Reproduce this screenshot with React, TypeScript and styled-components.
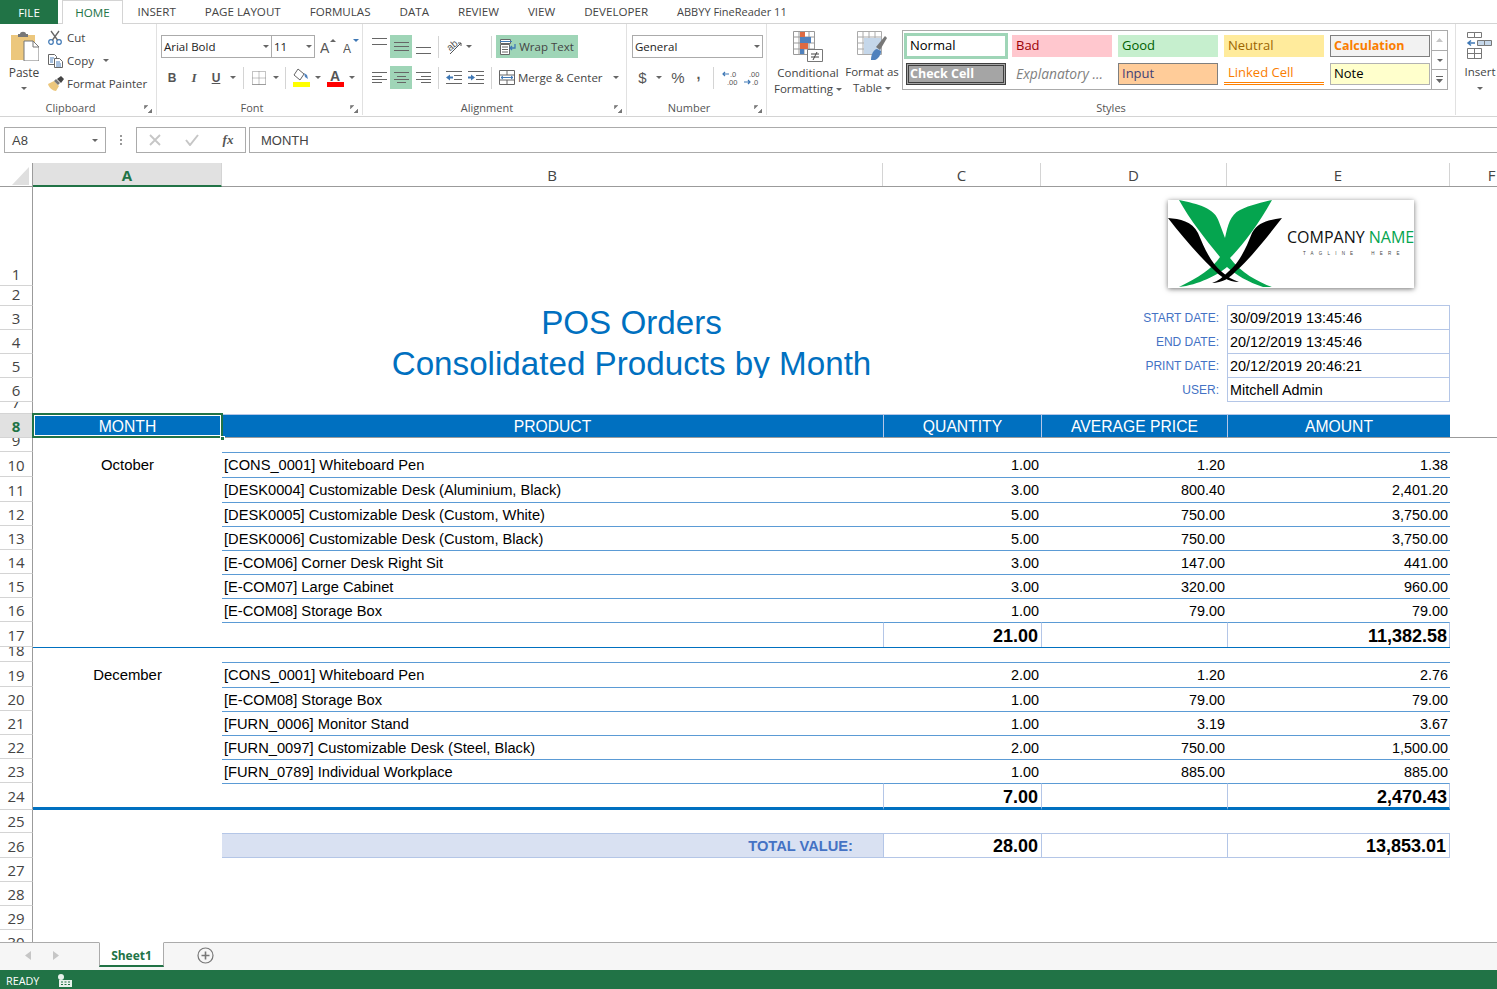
import React from "react";
import styled, { createGlobalStyle } from "styled-components";

const GREEN = "#217346";
const BLUE = "#0070c0";
const LINE = "#5b9bd5";
const SOFT = "#b4c6e7";
const SEP = "#d4d4d4";
const HILITE = "#9fd5b7";
const UI_FONT = `"Open Sans", "Noto Sans", sans-serif`;
const CELL_FONT = `"Liberation Sans", Arial, sans-serif`;

const COLS = "33px 189px 661px 158px 186px 223px 84px";
const ROWS = [99, 20, 24, 24, 24, 24, 12, 24, 14, 25, 25, 24, 24, 24, 24, 24, 25, 15, 25, 24, 24, 24, 24, 27, 23, 25, 24, 24, 24, 24];

const TABS = ["INSERT", "PAGE LAYOUT", "FORMULAS", "DATA", "REVIEW", "VIEW", "DEVELOPER"];

const MONTHS = [
  {
    month: "October",
    start: 10,
    qty: "21.00",
    amount: "11,382.58",
    items: [
      ["[CONS_0001] Whiteboard Pen", "1.00", "1.20", "1.38"],
      ["[DESK0004] Customizable Desk (Aluminium, Black)", "3.00", "800.40", "2,401.20"],
      ["[DESK0005] Customizable Desk (Custom, White)", "5.00", "750.00", "3,750.00"],
      ["[DESK0006] Customizable Desk (Custom, Black)", "5.00", "750.00", "3,750.00"],
      ["[E-COM06] Corner Desk Right Sit", "3.00", "147.00", "441.00"],
      ["[E-COM07] Large Cabinet", "3.00", "320.00", "960.00"],
      ["[E-COM08] Storage Box", "1.00", "79.00", "79.00"],
    ],
  },
  {
    month: "December",
    start: 19,
    qty: "7.00",
    amount: "2,470.43",
    items: [
      ["[CONS_0001] Whiteboard Pen", "2.00", "1.20", "2.76"],
      ["[E-COM08] Storage Box", "1.00", "79.00", "79.00"],
      ["[FURN_0006] Monitor Stand", "1.00", "3.19", "3.67"],
      ["[FURN_0097] Customizable Desk (Steel, Black)", "2.00", "750.00", "1,500.00"],
      ["[FURN_0789] Individual Workplace", "1.00", "885.00", "885.00"],
    ],
  },
];

const INFO = [
  ["START DATE:", "30/09/2019 13:45:46"],
  ["END DATE:", "20/12/2019 13:45:46"],
  ["PRINT DATE:", "20/12/2019 20:46:21"],
  ["USER:", "Mitchell Admin"],
];

const STYLE_CELLS: [string, string][] = [
  ["Normal", "normal"],
  ["Bad", "bad"],
  ["Good", "good"],
  ["Neutral", "neutral"],
  ["Calculation", "calc"],
  ["Check Cell", "check"],
  ["Explanatory ...", "explain"],
  ["Input", "input"],
  ["Linked Cell", "linked"],
  ["Note", "note"],
];

const STYLE_CSS: Record<string, string> = {
  normal: "background:#fff;color:#000;outline:3px solid #9fd5b7;outline-offset:-1px;",
  bad: "background:#ffc7ce;color:#9c0006;",
  good: "background:#c6efce;color:#006100;",
  neutral: "background:#ffeb9c;color:#9c6500;",
  calc: "background:#f2f2f2;color:#fa7d00;font-weight:700;font-size:12.5px;border:1px solid #7f7f7f;padding-left:3px;",
  check: "background:#a5a5a5;color:#fff;font-weight:700;font-size:12.5px;border:3px double #3f3f3f;padding-left:1px;",
  explain: "background:#fff;color:#7f7f7f;font-style:italic;font-size:13.8px;",
  input: "background:#ffcc99;color:#3f3f76;border:1px solid #7f7f7f;padding-left:3px;",
  linked: "background:#fff;color:#fa7d00;border-bottom:3px double #ff8001;",
  note: "background:#ffffcc;color:#000;border:1px solid #b2b2b2;padding-left:3px;",
};

const GlobalStyle = createGlobalStyle`
  html, body { margin: 0; padding: 0; background: #fff; }
  body { font-family: ${UI_FONT}; }
`;

const Page = styled.div`
  width: 100%;
  height: 989px;
  display: flex;
  flex-direction: column;
  overflow: hidden;
  background: #fff;
`;

const TabBar = styled.div`
  height: 24px;
  display: flex;
  box-sizing: border-box;
  border-bottom: 1px solid ${SEP};
  font-size: 11.6px;
  color: #444;
`;

const FileTab = styled.div`
  width: 58px;
  height: 24px;
  background: ${GREEN};
  color: #fff;
  display: flex;
  align-items: center;
  justify-content: center;
`;

const HomeTab = styled.div`
  width: 61px;
  height: 24px;
  margin-left: 4px;
  box-sizing: border-box;
  background: #fff;
  border: 1px solid ${SEP};
  border-bottom: none;
  color: ${GREEN};
  display: flex;
  align-items: center;
  justify-content: center;
`;

const TabItem = styled.div<{ $small?: boolean }>`
  height: 23px;
  display: flex;
  align-items: center;
  padding: 0 14.5px;
  white-space: nowrap;
  font-size: ${(p) => (p.$small ? "11px" : "inherit")};
`;

const Ribbon = styled.div`
  height: 93px;
  box-sizing: border-box;
  display: flex;
  border-bottom: 1px solid ${SEP};
  color: #444;
  font-size: 11.5px;
`;

const Group = styled.div<{ $w: number }>`
  width: ${(p) => p.$w}px;
  flex: none;
  box-sizing: border-box;
  position: relative;
  display: flex;
  flex-direction: column;
  border-right: 1px solid #e1e1e1;
  margin-bottom: 1px;
`;

const GroupBody = styled.div`
  flex: 1;
  display: flex;
  min-height: 0;
`;

const Caption = styled.div<{ $centered?: boolean }>`
  height: 15px;
  line-height: 15px;
  font-size: 11px;
  text-align: center;
  padding-right: ${(p) => (p.$centered ? 0 : 15)}px;
  color: #555;
`;

const Launcher = styled.svg`
  position: absolute;
  right: 4px;
  bottom: 2px;
`;

const Stack = styled.div<{ $pad?: number }>`
  display: flex;
  flex-direction: column;
  gap: 8px;
  padding: 11px 0 0 ${(p) => p.$pad ?? 0}px;
`;

const ToolRow = styled.div`
  display: flex;
  align-items: center;
  height: 23px;
`;

const Tool = styled.div<{ $w?: number; $on?: boolean; $start?: boolean }>`
  width: ${(p) => (p.$w ? `${p.$w}px` : "auto")};
  height: 23px;
  flex: none;
  box-sizing: border-box;
  display: flex;
  align-items: center;
  justify-content: ${(p) => (p.$start ? "flex-start" : "center")};
  padding-left: ${(p) => (p.$start ? 3 : 0)}px;
  gap: 3px;
  background: ${(p) => (p.$on ? HILITE : "transparent")};
  white-space: nowrap;
  svg {
    flex: none;
  }
`;

const Sep = styled.div<{ $l?: number; $r?: number }>`
  width: 1px;
  height: 22px;
  background: ${SEP};
  margin: 0 ${(p) => p.$r ?? 4}px 0 ${(p) => p.$l ?? 4}px;
  flex: none;
`;

const Caret = styled.span<{ $w?: number }>`
  width: ${(p) => p.$w ?? 11}px;
  flex: none;
  display: flex;
  justify-content: center;
  &::before {
    content: "";
    border-left: 3px solid transparent;
    border-right: 3px solid transparent;
    border-top: 3px solid #666;
  }
`;

const PasteButton = styled.div`
  width: 48px;
  display: flex;
  flex-direction: column;
  align-items: center;
  padding-top: 7px;
`;

const PasteLabel = styled.div`
  line-height: 16px;
  margin: 4px 0 6px;
  font-size: 12px;
`;

const ClipList = styled.div`
  display: flex;
  flex-direction: column;
  padding-top: 2px;
`;

const ClipItem = styled.div`
  height: 23px;
  display: flex;
  align-items: center;
  white-space: nowrap;
`;

const ClipIcon = styled.span`
  width: 19px;
  flex: none;
  display: flex;
`;

const SelectBox = styled.div<{ $w: number; $joined?: boolean }>`
  width: ${(p) => p.$w}px;
  height: 23px;
  box-sizing: border-box;
  border: 1px solid #ababab;
  border-left-width: ${(p) => (p.$joined ? 0 : 1)}px;
  display: flex;
  align-items: center;
  justify-content: space-between;
  padding-left: 2px;
  color: #222;
  font-size: 11.5px;
  flex: none;
`;

const Glyph = styled.span<{ $bold?: boolean; $italic?: boolean; $under?: boolean; $size?: number; $font?: string; $lift?: number }>`
  font-family: ${(p) => p.$font ?? `"Liberation Serif", serif`};
  font-weight: ${(p) => (p.$bold ? 700 : 400)};
  font-style: ${(p) => (p.$italic ? "italic" : "normal")};
  text-decoration: ${(p) => (p.$under ? "underline" : "none")};
  font-size: ${(p) => p.$size ?? 13}px;
  transform: translateY(${(p) => -(p.$lift ?? 0)}px);
  color: #555;
`;

const BigButton = styled.div<{ $w: number; $ml?: number }>`
  width: ${(p) => p.$w}px;
  margin-left: ${(p) => p.$ml ?? 0}px;
  flex: none;
  display: flex;
  flex-direction: column;
  align-items: center;
  padding-top: 7px;
  line-height: 16px;
  white-space: nowrap;
`;

const BigLabel = styled.div`
  margin-top: 3px;
  text-align: center;
`;

const BigLine = styled.div`
  display: flex;
  align-items: center;
  justify-content: center;
  gap: 2px;
  min-height: 16px;
`;

const Gallery = styled.div`
  width: 546px;
  height: 60px;
  margin: 6px 0 0 2px;
  box-sizing: border-box;
  border: 1px solid #ababab;
  display: flex;
  flex: none;
  justify-content: space-between;
`;

const GalleryGrid = styled.div`
  display: grid;
  grid-template-columns: repeat(5, 100px);
  grid-template-rows: 22px 22px;
  gap: 6px;
  padding: 4px 0 0 3px;
`;

const StyleCell = styled.div<{ $kind: string }>`
  box-sizing: border-box;
  font-size: 13px;
  padding: 0 0 2px 4px;
  display: flex;
  align-items: center;
  white-space: nowrap;
  ${(p) => STYLE_CSS[p.$kind]}
`;

const GalleryScroll = styled.div`
  width: 15px;
  border-left: 1px solid #ababab;
  display: flex;
  flex-direction: column;
`;

const ScrollBtn = styled.div`
  flex: 1;
  display: flex;
  align-items: center;
  justify-content: center;
  & + & {
    border-top: 1px solid #ababab;
  }
`;

const FormulaBar = styled.div`
  height: 26px;
  margin-top: 10px;
  padding-left: 4px;
  display: flex;
  box-sizing: border-box;
  color: #444;
`;

const NameBox = styled.div`
  width: 102px;
  box-sizing: border-box;
  border: 1px solid #ababab;
  display: flex;
  align-items: center;
  justify-content: space-between;
  padding: 0 5px 0 7px;
  font-family: ${CELL_FONT};
  font-size: 13px;
`;

const Dots = styled.div`
  width: 30px;
  display: flex;
  flex-direction: column;
  align-items: center;
  justify-content: center;
  gap: 2px;
  span {
    width: 2px;
    height: 2px;
    background: #999;
  }
`;

const FxBox = styled.div`
  width: 110px;
  box-sizing: border-box;
  border: 1px solid #ababab;
  display: grid;
  grid-template-columns: 36px 37px 36px;
  align-items: center;
  justify-items: center;
`;

const FormulaInput = styled.div`
  flex: 1;
  margin-left: 3px;
  box-sizing: border-box;
  border: 1px solid #ababab;
  border-right: none;
  display: flex;
  align-items: center;
  padding-left: 11px;
  font-family: ${CELL_FONT};
  font-size: 13px;
`;

const ColumnHeader = styled.div`
  height: 24px;
  margin-top: 10px;
  flex: none;
  display: grid;
  grid-template-columns: ${COLS};
  box-sizing: border-box;
  border-bottom: 1px solid #9b9b9b;
`;

const Corner = styled.div`
  display: flex;
  align-items: flex-end;
  justify-content: flex-end;
  padding: 0 3px 2px 0;
  border-right: 1px solid #9b9b9b;
`;

const ColHead = styled.div<{ $active?: boolean }>`
  display: flex;
  align-items: center;
  justify-content: center;
  box-sizing: border-box;
  font-size: 15px;
  height: ${(p) => (p.$active ? "24px" : "23px")};
  padding-top: ${(p) => (p.$active ? 1 : 0)}px;
  color: ${(p) => (p.$active ? GREEN : "#444")};
  font-weight: ${(p) => (p.$active ? 700 : 400)};
  background: ${(p) => (p.$active ? "#e1e1e1" : "#fff")};
  border-right: 1px solid ${SEP};
  border-bottom: ${(p) => (p.$active ? `2px solid ${GREEN}` : "none")};
  overflow: hidden;
`;

const SheetArea = styled.div`
  flex: 1;
  min-height: 0;
  overflow: hidden;
  position: relative;
`;

const Sheet = styled.div`
  display: grid;
  grid-template-columns: ${COLS};
  grid-template-rows: ${ROWS.map((h) => `${h}px`).join(" ")};
  font-family: ${CELL_FONT};
  font-size: 14.67px;
  color: #000;
`;

const RowHead = styled.div<{ $active?: boolean; $lift?: number }>`
  grid-column: 1;
  box-sizing: border-box;
  display: flex;
  align-items: flex-end;
  justify-content: center;
  overflow: hidden;
  font-family: ${UI_FONT};
  line-height: 22px;
  font-size: 15px;
  padding-bottom: ${(p) => p.$lift ?? 0}px;
  color: ${(p) => (p.$active ? GREEN : "#444")};
  font-weight: ${(p) => (p.$active ? 700 : 400)};
  background: ${(p) => (p.$active ? "#e1e1e1" : "#fff")};
  border-right: 1px solid #9b9b9b;
  border-bottom: 1px solid ${SEP};
`;

const Blank = styled.div<{ $span?: number; $top?: string; $thick?: boolean; $under?: boolean }>`
  grid-column: span ${(p) => p.$span ?? 1};
  box-sizing: border-box;
  border-top: ${(p) => (p.$top ? `1px solid ${p.$top}` : "none")};
  border-bottom: ${(p) => (p.$thick ? `3px solid ${BLUE}` : p.$under ? "1px solid #9b9b9b" : "none")};
`;

const Title = styled.div`
  grid-column: span 2;
  grid-row: span 3;
  overflow: hidden;
  box-sizing: border-box;
  padding-top: 2px;
  display: flex;
  flex-direction: column;
  align-items: center;
  justify-content: center;
  color: ${BLUE};
  font-size: 33.2px;
  line-height: 41px;
  white-space: nowrap;
`;

const InfoLabel = styled.div`
  display: flex;
  align-items: center;
  justify-content: flex-end;
  padding-right: 8px;
  color: #4472c4;
  font-size: 12px;
`;

const InfoValue = styled.div<{ $last?: boolean }>`
  box-sizing: border-box;
  display: flex;
  align-items: center;
  padding-left: 2px;
  font-size: 14.4px;
  margin-top: -1px;
  border: 1px solid ${SOFT};
  border-bottom-width: ${(p) => (p.$last ? 1 : 0)}px;
  height: 25px;
`;

const HeadCell = styled.div<{ $first?: boolean }>`
  box-sizing: border-box;
  background: ${BLUE};
  color: #fff;
  font-size: 15.7px;
  padding-top: 2px;
  display: flex;
  align-items: center;
  justify-content: center;
  border-left: ${(p) => (p.$first ? "none" : `1px solid ${SOFT}`)};
  border-bottom: 1px solid #9b9b9b;
  border-top: 1px solid ${SOFT};
`;

const SelectedCell = styled(HeadCell)`
  position: relative;
  border: none;
  &::before {
    content: "";
    position: absolute;
    inset: -1px -1px 0 -1px;
    border: 2px solid ${GREEN};
    box-shadow: inset 0 0 0 1px #fff;
  }
  &::after {
    content: "";
    position: absolute;
    right: -3px;
    bottom: -3px;
    width: 5px;
    height: 5px;
    background: ${GREEN};
    border: 1px solid #fff;
    box-sizing: border-box;
  }
`;

const MonthCell = styled.div`
  display: flex;
  align-items: center;
  justify-content: center;
  font-size: 14.9px;
`;

const DataCell = styled.div<{ $right?: boolean }>`
  box-sizing: border-box;
  border-top: 1px solid ${LINE};
  display: flex;
  align-items: center;
  justify-content: ${(p) => (p.$right ? "flex-end" : "flex-start")};
  font-size: ${(p) => (p.$right ? "14.4px" : "14.67px")};
  padding: 0 2px;
  white-space: nowrap;
`;

const TotalCell = styled.div<{ $left?: boolean; $right?: boolean; $line?: string; $thick?: boolean }>`
  box-sizing: border-box;
  border-top: 1px solid ${(p) => p.$line ?? LINE};
  border-left: ${(p) => (p.$left ? `1px solid ${SOFT}` : "none")};
  border-right: ${(p) => (p.$right ? `1px solid ${SOFT}` : "none")};
  border-bottom: ${(p) => (p.$thick ? `3px solid ${BLUE}` : "none")};
  display: flex;
  align-items: center;
  justify-content: flex-end;
  padding: 3px ${(p) => (p.$right ? 2 : 3)}px 0 0;
  font-weight: 700;
  font-size: 18px;
  white-space: nowrap;
`;

const TotalLabel = styled.div`
  box-sizing: border-box;
  background: #d9e1f2;
  border-top: 1px solid ${SOFT};
  border-bottom: 1px solid ${SOFT};
  display: flex;
  align-items: center;
  justify-content: flex-end;
  padding-right: 30px;
  color: #4472c4;
  font-weight: 700;
`;

const GrandCell = styled(TotalCell)`
  border-bottom: 1px solid ${SOFT};
  padding: 1px 3px 0 0;
`;

const LogoBox = styled.svg`
  position: absolute;
  left: 1168px;
  top: 13px;
  background: #fff;
  box-shadow: 0 1px 5px rgba(0, 0, 0, 0.55);
`;

const SheetTabs = styled.div`
  height: 28px;
  flex: none;
  box-sizing: border-box;
  background: #f6f6f6;
  border-top: 1px solid #ababab;
  display: flex;
  align-items: flex-start;
`;

const TabArrows = styled.div`
  width: 99px;
  height: 25px;
  display: flex;
  align-items: center;
  gap: 22px;
  padding-left: 25px;
  box-sizing: border-box;
`;

const SheetTab = styled.div`
  width: 65px;
  height: 25px;
  margin-top: -1px;
  box-sizing: border-box;
  background: #fff;
  border: 1px solid #ababab;
  border-top-color: #fff;
  border-bottom: 2px solid ${GREEN};
  color: ${GREEN};
  font-weight: 700;
  font-size: 12px;
  padding-top: 2px;
  display: flex;
  align-items: center;
  justify-content: center;
`;

const AddSheet = styled.div`
  margin: 4px 0 0 33px;
  display: flex;
`;

const StatusBar = styled.div`
  height: 19px;
  flex: none;
  box-sizing: border-box;
  background: ${GREEN};
  color: #fff;
  font-size: 10.8px;
  display: flex;
  align-items: center;
  padding: 2px 0 0 6px;
  gap: 19px;
`;

const Lines = ({ rows }: { rows: [number, number, number][] }) => (
  <svg width="15" height="23" viewBox="0 0 15 23">
    {rows.map(([a, b, y]) => (
      <path key={y} d={`M${a} ${y}H${b}`} stroke="#666" />
    ))}
  </svg>
);

const PasteIcon = () => (
  <svg width="30" height="30" viewBox="0 0 30 30">
    <path d="M2 4h24v25H2z" fill="#ecc77d" />
    <path d="M9 3h2c0-3 6-3 6 0h2v3H9z" fill="#777" />
    <path d="M15 10h9l6 6v14H15z" fill="#fff" stroke="#777" />
    <path d="M24 10v6h6" fill="none" stroke="#777" />
  </svg>
);

const CutIcon = () => (
  <svg width="15" height="15" viewBox="0 0 15 15">
    <circle cx="3" cy="12" r="2.3" fill="none" stroke="#3f78b5" strokeWidth="1.2" />
    <circle cx="11" cy="12" r="2.3" fill="none" stroke="#3f78b5" strokeWidth="1.2" />
    <path d="M3 1l6.5 9M11 1L4.5 10" stroke="#666" strokeWidth="1.3" fill="none" />
  </svg>
);

const CopyIcon = () => (
  <svg width="15" height="14" viewBox="0 0 15 14">
    <path d="M.5.5h6l2 2v8h-8z" fill="#fff" stroke="#666" />
    <path d="M6.5 4.5h5l3 3v6h-8z" fill="#fff" stroke="#666" />
    <path d="M2 4h4M2 6h3M2 8h3M8 8h4M8 10h5M8 12h5" stroke="#4f81bd" />
  </svg>
);

const PainterIcon = () => (
  <svg width="16" height="15" viewBox="0 0 16 15">
    <path d="M0 8l6-3 5 5-3 5c-3 0-7-3-8-7z" fill="#ecc77d" />
    <path d="M6 5l2-2 4 4-2 2z" fill="#777" />
    <path d="M9 3l4-3 3 3-3 4z" fill="#444" />
  </svg>
);

const SizeA = ({ up }: { up?: boolean }) => (
  <svg width="17" height="17" viewBox="0 0 17 17">
    <text x="0" y="15" fontFamily={CELL_FONT} fontSize={up ? 14 : 12} fill="#555">
      A
    </text>
    <path d={up ? "M10 4l3-3 3 3z" : "M10 1l3 3 3-3z"} fill={up ? "#666" : "#3f78b5"} />
  </svg>
);

const BordersIcon = () => (
  <svg width="14" height="14" viewBox="0 0 14 14">
    <path d="M.5.5h13v13H.5zM7 .5v13M.5 7h13" fill="none" stroke="#888" strokeDasharray="1 1" />
    <path d="M.5 13.5h13" stroke="#777" strokeDasharray="1 1" />
  </svg>
);

const FillIcon = () => (
  <svg width="17" height="19" viewBox="0 0 17 19">
    <path d="M5 1l6 5-4 6-6-5z" fill="#fff" stroke="#666" />
    <path d="M11 5l3 2 1 4-3-2z" fill="#4f81bd" />
    <path d="M0 14h17v5H0z" fill="#ffff00" />
  </svg>
);

const FontColorIcon = () => (
  <svg width="17" height="19" viewBox="0 0 17 19">
    <text x="3" y="13" fontFamily={CELL_FONT} fontWeight="700" fontSize="14" fill="#555">
      A
    </text>
    <path d="M0 14h17v5H0z" fill="#ff0000" />
  </svg>
);

const OrientIcon = () => (
  <svg width="19" height="19" viewBox="0 0 19 19">
    <text x="2" y="12" fontFamily={CELL_FONT} fontSize="10" fill="#555" transform="rotate(-40 7 9)">
      ab
    </text>
    <path d="M5 17L16 6M16 6h-3M16 6v3" stroke="#555" fill="none" />
  </svg>
);

const IndentIcon = ({ back }: { back?: boolean }) => (
  <svg width="16" height="13" viewBox="0 0 16 13">
    <path d="M0 .5h16M8 4.5h8M8 8.5h8M0 12.5h16" stroke="#666" />
    <path d={back ? "M0 6.5l4-3v2h3v2H4v2z" : "M7 6.5l-4-3v2H0v2h3v2z"} fill="#3f78b5" />
  </svg>
);

const WrapIcon = () => (
  <svg width="16" height="16" viewBox="0 0 16 16">
    <path d="M.5.5h10v4H.5zM.5 5.500h9v10h-9z" fill="#fff" stroke="#666" />
    <path d="M2 8h6M2 10.500h6M2 13h6" stroke="#666" />
    <path d="M0 2.500h12" stroke="#3f78b5" />
    <path d="M15 5v4H10M12 7l-2 2 2 2" stroke="#3f78b5" fill="none" strokeWidth="1.300" />
  </svg>
);

const MergeIcon = () => (
  <svg width="16" height="15" viewBox="0 0 16 15">
    <path d="M.5.5h15v14H.5zM.5 5h15M.5 10h15M8 .5V5M8 10v4.500" fill="#fff" stroke="#666" />
    <path d="M2 7.500h12M4 6L2 7.500 4 9M12 6l2 1.500L12 9" stroke="#3f78b5" fill="none" />
  </svg>
);

const DecimalIcon = ({ more }: { more?: boolean }) => (
  <svg width="18" height="16" viewBox="0 0 18 16">
    <text x={more ? 6 : 9} y="6.500" fontFamily={CELL_FONT} fontSize="7.500" fill="#555">
      {more ? ".00" : ".0"}
    </text>
    <text x={more ? 9 : 6} y="15" fontFamily={CELL_FONT} fontSize="7.500" fill="#555">
      {more ? ".0" : ".00"}
    </text>
    <path d={more ? "M1 12h6M5 10l2 2-2 2" : "M8 4H2M4 2L2 4l2 2"} stroke="#3f78b5" fill="none" strokeWidth="1.200" />
  </svg>
);

const CondFormatIcon = () => (
  <svg width="30" height="31" viewBox="0 0 30 31">
    <path d="M.5.500h21v23H.5zM.5 6h21M.5 12h21M.5 18h21M6 .500v23M11 .500v23M16 .500v23" fill="#fff" stroke="#999" />
    <path d="M7 1h5v5H7z" fill="#dd6a42" />
    <path d="M7 6h11v6H7z" fill="#4f81bd" />
    <path d="M7 12h8v6H7z" fill="#dd6a42" />
    <path d="M7 18h4v5H7z" fill="#4f81bd" />
    <path d="M14.500 18.500h15v12h-15z" fill="#fff" stroke="#777" />
    <path d="M18 23h8M18 26h8M24 21l-4 8" stroke="#444" />
  </svg>
);

const FormatTableIcon = () => (
  <svg width="30" height="30" viewBox="0 0 30 30">
    <path d="M.5.500h24v23H.5zM.5 6h24M.5 12h24M.5 18h24M6 .500v23M12 .500v23M18 .500v23" fill="#fff" stroke="#aaa" />
    <path d="M7 7h17v16H7z" fill="#c5d7ea" />
    <path d="M19 16L28 5l2 2-7 12z" fill="#777" />
    <path d="M14 29c0-6 3-11 6-11l4 2c0 4-3 8-6 9z" fill="#4f81bd" />
  </svg>
);

const InsertIcon = () => (
  <svg width="28" height="30" viewBox="0 0 28 30">
    <path d="M1.500 1.500h7v5h-7zM8.500 1.500h7v5h-7z" fill="#fff" stroke="#777" />
    <path d="M11.500 9.500h7v5h-7zM18.500 9.500h7v5h-7z" fill="#c5d7ea" stroke="#777" />
    <path d="M9 12H3M5 9.500L2 12l3 2.500" stroke="#3f78b5" fill="none" strokeWidth="1.500" />
    <path d="M1.500 17.500h14v10h-14zM8.500 17.500v10M1.500 22.500h14" fill="#fff" stroke="#777" />
  </svg>
);

const LauncherIcon = () => (
  <Launcher width="8" height="8" viewBox="0 0 8 8">
    <path d="M.5 4V.5H4M8 8H4l4-4z" fill="#777" stroke="#777" strokeWidth=".6" />
  </Launcher>
);

const Logo = () => (
  <LogoBox width="246" height="88" viewBox="0 0 246 88">
    <path
      d="M11 0C30 4 47 8 51 22L57 38C60 25 62 15 72 10C82 5 95 2 104 0C90 25 75 45 62 58C72 72 90 82 104 87L95 87C80 82 68 75 59 67C50 75 30 85 11 87C30 78 45 68 52 57C38 40 22 20 11 0Z"
      fill="#05a54f"
    />
    <path d="M0 18C12 19 24 21 30 33C36 47 42 62 54 72C60 77 65 80 71 82C60 82 52 76 46 70C30 55 14 36 0 18Z" fill="#000" />
    <path d="M114 18C100 20 90 22 84 33C78 48 72 62 60 72C55 77 50 81 44 83C54 83 62 78 68 71C84 57 100 36 114 18Z" fill="#000" />
    <text x="119" y="43" fontFamily={`"Open Sans", sans-serif`} fontSize="16" fill="#111">
      COMPANY <tspan fill="#05a54f">NAME</tspan>
    </text>
    <text x="135" y="55" fontFamily={CELL_FONT} fontSize="4.500" letterSpacing="5.200" fill="#444">
      TAGLINE
      <tspan dx="13">HERE</tspan>
    </text>
  </LogoBox>
);

const App = () => {
  return (
    <Page>
      <GlobalStyle />
      <TabBar>
        <FileTab>FILE</FileTab>
        <HomeTab>HOME</HomeTab>
        {TABS.map((t) => (
          <TabItem key={t}>{t}</TabItem>
        ))}
        <TabItem $small>ABBYY FineReader 11</TabItem>
      </TabBar>

      <Ribbon>
        <Group $w={157}>
          <GroupBody>
            <PasteButton>
              <PasteIcon />
              <PasteLabel>Paste</PasteLabel>
              <Caret $w={16} />
            </PasteButton>
            <ClipList>
              <ClipItem>
                <ClipIcon>
                  <CutIcon />
                </ClipIcon>
                Cut
              </ClipItem>
              <ClipItem>
                <ClipIcon>
                  <CopyIcon />
                </ClipIcon>
                Copy
                <Caret $w={24} />
              </ClipItem>
              <ClipItem>
                <ClipIcon>
                  <PainterIcon />
                </ClipIcon>
                Format Painter
              </ClipItem>
            </ClipList>
          </GroupBody>
          <Caption>Clipboard</Caption>
          <LauncherIcon />
        </Group>

        <Group $w={206}>
          <GroupBody>
            <Stack $pad={4}>
              <ToolRow>
                <SelectBox $w={111}>
                  Arial Bold
                  <Caret />
                </SelectBox>
                <SelectBox $w={43} $joined>
                  11
                  <Caret />
                </SelectBox>
                <Tool $w={26}>
                  <SizeA up />
                </Tool>
                <Tool $w={20}>
                  <SizeA />
                </Tool>
              </ToolRow>
              <ToolRow>
                <Tool $w={22}>
                  <Glyph $bold $size={12} $font={CELL_FONT}>B</Glyph>
                </Tool>
                <Tool $w={22}>
                  <Glyph $italic $bold $size={13}>I</Glyph>
                </Tool>
                <Tool $w={22}>
                  <Glyph $bold $under $size={12} $font={CELL_FONT}>U</Glyph>
                </Tool>
                <Caret $w={12} />
                <Sep />
                <Tool $w={22}>
                  <BordersIcon />
                </Tool>
                <Caret />
                <Sep />
                <Tool $w={22}>
                  <FillIcon />
                </Tool>
                <Caret $w={12} />
                <Tool $w={22}>
                  <FontColorIcon />
                </Tool>
                <Caret />
              </ToolRow>
            </Stack>
          </GroupBody>
          <Caption>Font</Caption>
          <LauncherIcon />
        </Group>

        <Group $w={264}>
          <GroupBody>
            <Stack $pad={5}>
              <ToolRow>
                <Tool $w={22}>
                  <Lines rows={[[0, 15, 3.5], [0, 15, 9.5]]} />
                </Tool>
                <Tool $w={22} $on>
                  <Lines rows={[[0, 15, 7.5], [0, 15, 11.5], [0, 15, 15.5]]} />
                </Tool>
                <Tool $w={22}>
                  <Lines rows={[[0, 15, 12.5], [0, 15, 18.5]]} />
                </Tool>
                <Sep />
                <Tool $w={22}>
                  <OrientIcon />
                </Tool>
                <Caret $w={7} />
                <Sep $l={19} />
                <Tool $w={82} $on>
                  <WrapIcon />
                  Wrap Text
                </Tool>
              </ToolRow>
              <ToolRow>
                <Tool $w={22}>
                  <Lines rows={[[0, 15, 6.5], [0, 10, 10.5], [0, 15, 13.5], [0, 10, 16.5]]} />
                </Tool>
                <Tool $w={22} $on>
                  <Lines rows={[[0, 15, 6.5], [3, 12, 10.5], [0, 15, 13.5], [3, 12, 16.5]]} />
                </Tool>
                <Tool $w={22}>
                  <Lines rows={[[0, 15, 6.5], [5, 15, 10.5], [0, 15, 13.5], [5, 15, 16.5]]} />
                </Tool>
                <Sep />
                <Tool $w={22}>
                  <IndentIcon back />
                </Tool>
                <Tool $w={22}>
                  <IndentIcon />
                </Tool>
                <Sep />
                <Tool $w={130} $start>
                  <MergeIcon />
                  Merge &amp; Center
                  <Caret $w={20} />
                </Tool>
              </ToolRow>
            </Stack>
          </GroupBody>
          <Caption>Alignment</Caption>
          <LauncherIcon />
        </Group>

        <Group $w={140}>
          <GroupBody>
            <Stack $pad={5}>
              <ToolRow>
                <SelectBox $w={131}>
                  General
                  <Caret />
                </SelectBox>
              </ToolRow>
              <ToolRow>
                <Tool $w={21}>
                  <Glyph $size={15} $font={CELL_FONT}>$</Glyph>
                </Tool>
                <Caret />
                <Tool $w={28}>
                  <Glyph $size={15} $font={CELL_FONT}>%</Glyph>
                </Tool>
                <Tool $w={13}>
                  <Glyph $bold $size={14} $font={CELL_FONT} $lift={4}>,</Glyph>
                </Tool>
                <Sep $l={8} $r={5} />
                <Tool $w={22}>
                  <DecimalIcon />
                </Tool>
                <Tool $w={22}>
                  <DecimalIcon more />
                </Tool>
              </ToolRow>
            </Stack>
          </GroupBody>
          <Caption>Number</Caption>
          <LauncherIcon />
        </Group>

        <Group $w={689}>
          <GroupBody>
            <BigButton $w={72} $ml={5}>
              <CondFormatIcon />
              <BigLabel>
                Conditional
                <BigLine>
                  Formatting
                  <Caret $w={7} />
                </BigLine>
              </BigLabel>
            </BigButton>
            <BigButton $w={56}>
              <FormatTableIcon />
              <BigLabel>
                Format as
                <BigLine>
                  Table
                  <Caret $w={7} />
                </BigLine>
              </BigLabel>
            </BigButton>
            <Gallery>
              <GalleryGrid>
                {STYLE_CELLS.map(([label, kind]) => (
                  <StyleCell key={kind} $kind={kind}>
                    {label}
                  </StyleCell>
                ))}
              </GalleryGrid>
              <GalleryScroll>
                <ScrollBtn>
                  <svg width="7" height="4" viewBox="0 0 7 4">
                    <path d="M0 4l3.500-4L7 4z" fill="#c6c6c6" />
                  </svg>
                </ScrollBtn>
                <ScrollBtn>
                  <Caret $w={7} />
                </ScrollBtn>
                <ScrollBtn>
                  <svg width="7" height="7" viewBox="0 0 7 7">
                    <path d="M0 .500h7" stroke="#666" />
                    <path d="M0 3l3.500 4L7 3z" fill="#666" />
                  </svg>
                </ScrollBtn>
              </GalleryScroll>
            </Gallery>
          </GroupBody>
          <Caption $centered>Styles</Caption>
        </Group>

        <BigButton $w={36} $ml={6}>
          <InsertIcon />
          <BigLabel>
            Insert
            <BigLine>
              <Caret $w={7} />
            </BigLine>
          </BigLabel>
        </BigButton>
      </Ribbon>

      <FormulaBar>
        <NameBox>
          A8
          <Caret $w={10} />
        </NameBox>
        <Dots>
          <span />
          <span />
          <span />
        </Dots>
        <FxBox>
          <svg width="12" height="12" viewBox="0 0 12 12">
            <path d="M1 1l10 10M11 1L1 11" stroke="#c6c6c6" strokeWidth="1.800" />
          </svg>
          <svg width="14" height="12" viewBox="0 0 14 12">
            <path d="M1 6l4 5 8-10" stroke="#c6c6c6" strokeWidth="2" fill="none" />
          </svg>
          <Glyph $italic $bold $size={13}>fx</Glyph>
        </FxBox>
        <FormulaInput>MONTH</FormulaInput>
      </FormulaBar>

      <ColumnHeader>
        <Corner>
          <svg width="17" height="18" viewBox="0 0 17 18">
            <path d="M17 0v18H0z" fill="#dfdfdf" />
          </svg>
        </Corner>
        <ColHead $active>A</ColHead>
        <ColHead>B</ColHead>
        <ColHead>C</ColHead>
        <ColHead>D</ColHead>
        <ColHead>E</ColHead>
        <ColHead>F</ColHead>
      </ColumnHeader>

      <SheetArea>
        <Sheet>
          <RowHead>1</RowHead>
          <Blank $span={6} />
          <RowHead>2</RowHead>
          <Blank $span={6} />

          <RowHead>3</RowHead>
          <Blank />
          <Title>
            <div>POS Orders</div>
            <div>Consolidated Products by Month</div>
          </Title>
          <InfoLabel>{INFO[0][0]}</InfoLabel>
          <InfoValue>{INFO[0][1]}</InfoValue>
          <Blank />
          <RowHead>4</RowHead>
          <Blank />
          <InfoLabel>{INFO[1][0]}</InfoLabel>
          <InfoValue>{INFO[1][1]}</InfoValue>
          <Blank />
          <RowHead>5</RowHead>
          <Blank />
          <InfoLabel>{INFO[2][0]}</InfoLabel>
          <InfoValue>{INFO[2][1]}</InfoValue>
          <Blank />
          <RowHead>6</RowHead>
          <Blank $span={3} />
          <InfoLabel>{INFO[3][0]}</InfoLabel>
          <InfoValue $last>{INFO[3][1]}</InfoValue>
          <Blank />
          <RowHead>7</RowHead>
          <Blank $span={6} />

          <RowHead $active>8</RowHead>
          <SelectedCell $first>MONTH</SelectedCell>
          <HeadCell $first>PRODUCT</HeadCell>
          <HeadCell>QUANTITY</HeadCell>
          <HeadCell>AVERAGE PRICE</HeadCell>
          <HeadCell>AMOUNT</HeadCell>
          <Blank $under />
          <RowHead>9</RowHead>
          <Blank $span={6} />

          {MONTHS.map((group, g) => (
            <React.Fragment key={group.month}>
              {group.items.map((item, i) => (
                <React.Fragment key={item[0]}>
                  <RowHead>{group.start + i}</RowHead>
                  {i === 0 ? <MonthCell>{group.month}</MonthCell> : <Blank />}
                  <DataCell>{item[0]}</DataCell>
                  <DataCell $right>{item[1]}</DataCell>
                  <DataCell $right>{item[2]}</DataCell>
                  <DataCell $right>{item[3]}</DataCell>
                  <Blank />
                </React.Fragment>
              ))}
              <RowHead $lift={g === 0 ? 0 : 2}>{group.start + group.items.length}</RowHead>
              {g === 0 ? (
                <>
                  <Blank />
                  <Blank $top={LINE} />
                  <TotalCell $left>{group.qty}</TotalCell>
                  <TotalCell $left />
                  <TotalCell $left $right>{group.amount}</TotalCell>
                  <Blank />
                  <RowHead>18</RowHead>
                  <Blank $span={5} $top={BLUE} />
                  <Blank />
                </>
              ) : (
                <>
                  <Blank $thick />
                  <Blank $top={LINE} $thick />
                  <TotalCell $left $thick>{group.qty}</TotalCell>
                  <TotalCell $left $thick />
                  <TotalCell $left $right $thick>{group.amount}</TotalCell>
                  <Blank />
                </>
              )}
            </React.Fragment>
          ))}

          <RowHead>25</RowHead>
          <Blank $span={6} />
          <RowHead>26</RowHead>
          <Blank />
          <TotalLabel>TOTAL VALUE:</TotalLabel>
          <GrandCell $left $line={SOFT}>28.00</GrandCell>
          <GrandCell $left $line={SOFT} />
          <GrandCell $left $right $line={SOFT}>13,853.01</GrandCell>
          <Blank />
          {[27, 28, 29, 30].map((n) => (
            <React.Fragment key={n}>
              <RowHead>{n}</RowHead>
              <Blank $span={6} />
            </React.Fragment>
          ))}
        </Sheet>
        <Logo />
      </SheetArea>

      <SheetTabs>
        <TabArrows>
          <svg width="6" height="9" viewBox="0 0 6 9">
            <path d="M6 0v9L0 4.500z" fill="#c6c6c6" />
          </svg>
          <svg width="6" height="9" viewBox="0 0 6 9">
            <path d="M0 0v9l6-4.500z" fill="#c6c6c6" />
          </svg>
        </TabArrows>
        <SheetTab>Sheet1</SheetTab>
        <AddSheet>
          <svg width="17" height="17" viewBox="0 0 17 17">
            <circle cx="8.500" cy="8.500" r="7.500" fill="none" stroke="#777" strokeWidth="1.200" />
            <path d="M4.500 8.500h8M8.500 4.500v8" stroke="#777" strokeWidth="1.600" />
          </svg>
        </AddSheet>
      </SheetTabs>

      <StatusBar>
        READY
        <svg width="14" height="13" viewBox="0 0 14 13">
          <circle cx="3" cy="3" r="3" fill="#e8f2ec" />
          <path d="M1 6h13v7H1z" fill="#e8f2ec" />
          <path d="M3 8h2M6.500 8h2M10 8h2M3 10.500h2M6.500 10.500h2M10 10.500h2" stroke="#217346" />
        </svg>
      </StatusBar>
    </Page>
  );
};

export default App;
